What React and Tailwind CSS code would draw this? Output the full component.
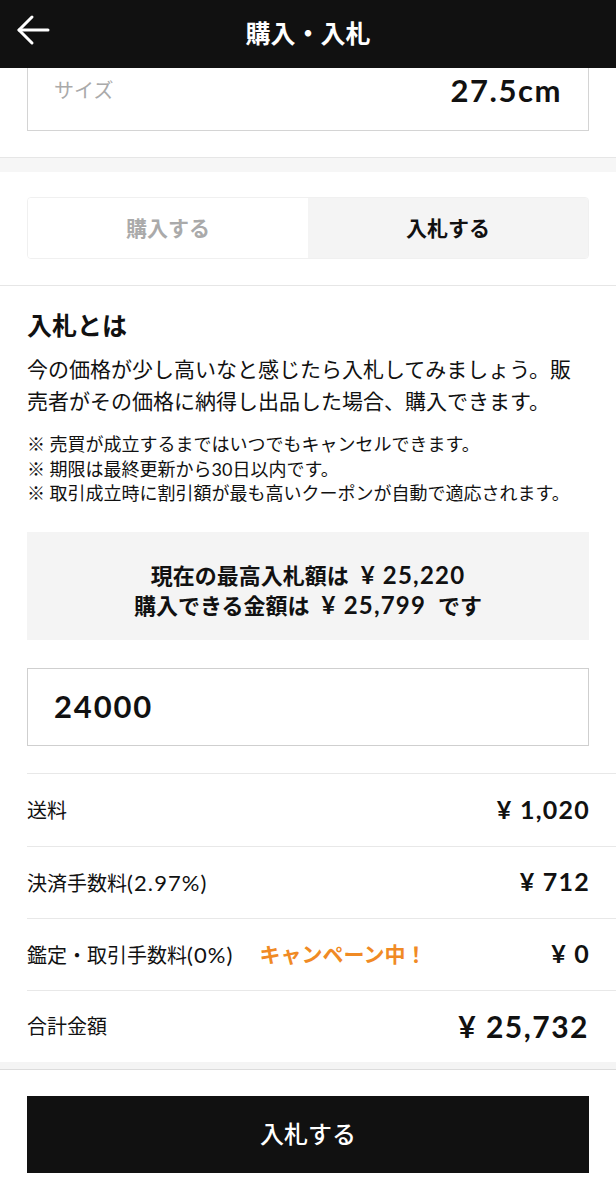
const FONT = "font-['Lato','Noto_Sans_CJK_JP',sans-serif]";

const FEES = [
  { label: "送料", value: "¥ 1,020" },
  { label: "決済手数料", extra: "(2.97%)", value: "¥ 712" },
  { label: "鑑定・取引手数料", extra: "(0%)", value: "¥ 0", note: "キャンペーン中！" },
];

function BackArrow() {
  return (
    <svg width="34" height="34" viewBox="0 0 34 34" fill="none" stroke="white" strokeWidth="3" strokeLinecap="round" strokeLinejoin="round">
      <path d="M32 17H3" />
      <path d="M16 4L3 17l13 13" />
    </svg>
  );
}

// latin figures in the reference are set in a wider face than Lato
function Num({ children, className = "" }) {
  return <span className={`tracking-[0.05em] ${className}`}>{children}</span>;
}

export default function App() {
  return (
    <div className={`w-[616px] min-h-[1200px] bg-white text-[#111] ${FONT}`}>
      <header className="relative flex h-[68px] items-center justify-center bg-[#111]">
        <button type="button" className="absolute left-[16px] top-[13px]">
          <BackArrow />
        </button>
        <h1 className="text-[25px] font-bold text-white">購入・入札</h1>
      </header>

      <section className="border-b border-[#e6e6e6] px-[27px] pb-[26px]">
        <div className="h-[63px] border border-t-0 border-[#d4d4d4] px-[26px]">
          <div className="flex h-[44px] items-center justify-between">
            <span className="text-[20px] text-[#aaa]">サイズ</span>
            <Num className="text-[31px] font-bold tracking-[0.04em]">27.5cm</Num>
          </div>
        </div>
      </section>

      <div className="h-[14px] bg-[#f6f6f6]" />

      <section className="border-b border-[#e6e6e6] px-[27px] pt-[25px] pb-[26px]">
        <div className="grid h-[62px] grid-cols-2 overflow-hidden rounded-[4px] border border-[#f0f0f0]">
          <button type="button" className="bg-white text-[21px] font-bold text-[#aaa]">
            購入する
          </button>
          <button type="button" className="bg-[#f4f4f4] text-[21px] font-bold">
            入札する
          </button>
        </div>
      </section>

      <section className="px-[27px] pt-[23px]">
        <h2 className="text-[25px] font-bold leading-[32px]">入札とは</h2>
        <p className="mt-[12px] text-[21px] leading-[32px]">
          今の価格が少し高いなと感じたら入札してみましょう。販売者がその価格に納得し出品した場合、購入できます。
        </p>
        <ul className="mt-[15px] text-[18px] leading-[24.5px]">
          <li>※ 売買が成立するまではいつでもキャンセルできます。</li>
          <li>※ 期限は最終更新から30日以内です。</li>
          <li>※ 取引成立時に割引額が最も高いクーポンが自動で適応されます。</li>
        </ul>

        <div className="mt-[26px] flex h-[108px] flex-col items-center bg-[#f4f4f4] pt-[28px] text-[22px] font-bold leading-[29px]">
          <p>
            現在の最高入札額は<Num className="ml-[12px] text-[24px]">¥ 25,220</Num>
          </p>
          <p>
            購入できる金額は<Num className="mx-[12px] text-[24px]">¥ 25,799</Num>です
          </p>
        </div>

        <div className="mt-[28px] flex h-[78px] items-center border border-[#cfcfcf] px-[26px]">
          <Num className="text-[31px] font-bold tracking-[0.06em]">24000</Num>
        </div>
      </section>

      <section className="mt-[27px] pl-[27px]">
        {FEES.map((fee, i) => (
          <div
            key={fee.label}
            className={`flex items-center justify-between border-t border-[#e8e8e8] pr-[27px] ${i === 0 ? "h-[73px]" : "h-[72px]"}`}
          >
            <div className="flex items-center">
              <span className="text-[20px]">
                {fee.label}
                {fee.extra && <Num className="text-[22px] tracking-[0.1em]">{fee.extra}</Num>}
              </span>
              {fee.note && <span className="ml-[26px] text-[21px] font-bold text-[#f08a24]">{fee.note}</span>}
            </div>
            <Num className="-mr-[1px] text-[25px] font-bold tracking-[0.03em]">{fee.value}</Num>
          </div>
        ))}
        <div className="flex h-[72px] items-center justify-between border-t border-[#e8e8e8] pr-[27px]">
          <span className="text-[20px]">合計金額</span>
          <Num className="text-[30px] font-bold tracking-[0.03em]">¥ 25,732</Num>
        </div>
      </section>

      <div className="h-[8px] border-b border-[#dcdcdc] bg-[#f4f4f4]" />

      <footer className="px-[27px] pt-[26px] pb-[26px]">
        <button type="button" className="h-[77px] w-full bg-[#111] text-[24px] font-medium text-white">
          入札する
        </button>
      </footer>
    </div>
  );
}
